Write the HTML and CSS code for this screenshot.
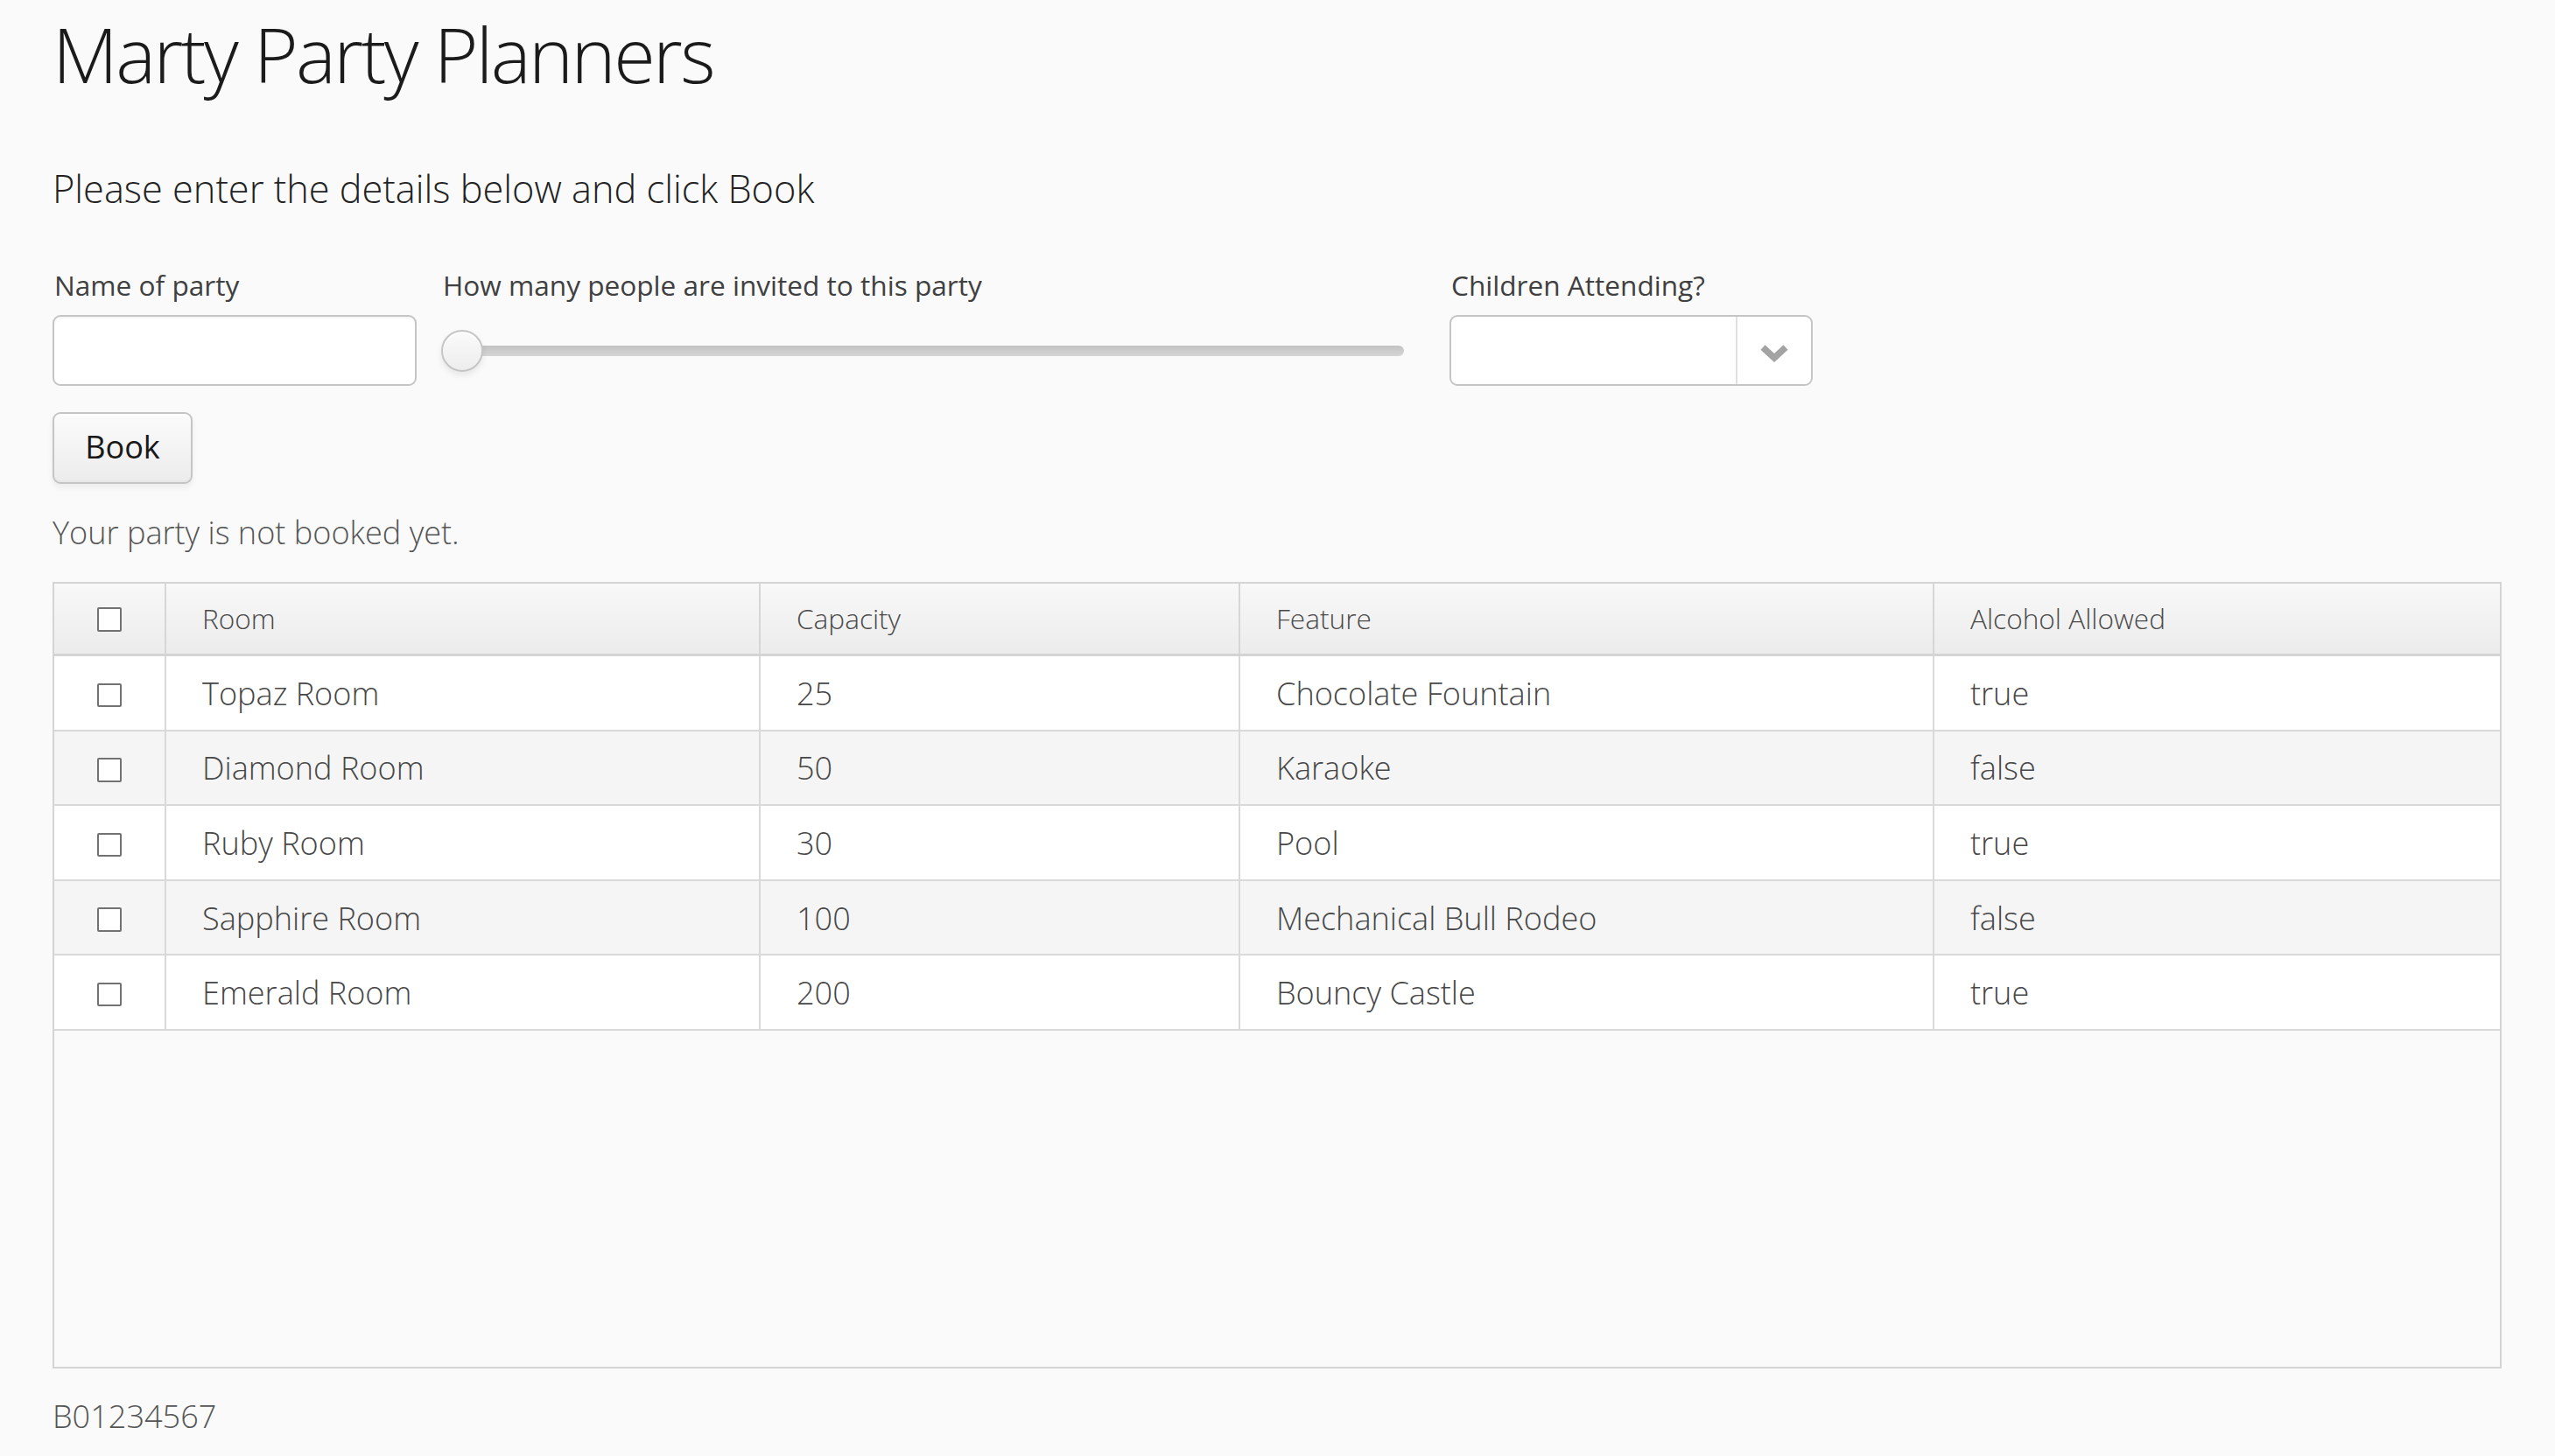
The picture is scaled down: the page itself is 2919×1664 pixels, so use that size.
FILE: index.html
```html
<!DOCTYPE html>
<html lang="en">
<head>
<meta charset="utf-8">
<title>Marty Party Planners</title>
<link rel="stylesheet" href="styles.css">
</head>
<body>
<div class="page">
  <h1 class="title">Marty Party Planners</h1>
  <p class="intro">Please enter the details below and click Book</p>

  <div class="form-row">
    <div class="field field-name">
      <label class="caption">Name of party</label>
      <input class="textfield" type="text">
    </div>
    <div class="field field-slider">
      <label class="caption caption-slider">How many people are invited to this party</label>
      <div class="slider">
        <div class="slider-track"></div>
        <div class="slider-handle"></div>
      </div>
    </div>
    <div class="field field-combo">
      <label class="caption">Children Attending?</label>
      <div class="combo">
        <div class="combo-input"></div>
        <div class="combo-button">
          <svg class="chevron" viewBox="0 0 32 22" width="32" height="22" aria-hidden="true">
            <polyline points="3,4 16,16 29,4" fill="none" stroke="#a3a3a3" stroke-width="7.5" stroke-linecap="butt" stroke-linejoin="miter"/>
          </svg>
        </div>
      </div>
    </div>
  </div>

  <button class="btn" type="button">Book</button>

  <p class="status">Your party is not booked yet.</p>

  <div class="grid">
    <div class="grid-row grid-header">
      <div class="cell cell-check"><span class="checkbox"></span></div>
      <div class="cell">Room</div>
      <div class="cell">Capacity</div>
      <div class="cell">Feature</div>
      <div class="cell cell-last">Alcohol Allowed</div>
    </div>
    <div class="grid-row grid-body odd">
      <div class="cell cell-check"><span class="checkbox"></span></div>
      <div class="cell">Topaz Room</div>
      <div class="cell">25</div>
      <div class="cell">Chocolate Fountain</div>
      <div class="cell cell-last">true</div>
    </div>
    <div class="grid-row grid-body even">
      <div class="cell cell-check"><span class="checkbox"></span></div>
      <div class="cell">Diamond Room</div>
      <div class="cell">50</div>
      <div class="cell">Karaoke</div>
      <div class="cell cell-last">false</div>
    </div>
    <div class="grid-row grid-body odd">
      <div class="cell cell-check"><span class="checkbox"></span></div>
      <div class="cell">Ruby Room</div>
      <div class="cell">30</div>
      <div class="cell">Pool</div>
      <div class="cell cell-last">true</div>
    </div>
    <div class="grid-row grid-body even">
      <div class="cell cell-check"><span class="checkbox"></span></div>
      <div class="cell">Sapphire Room</div>
      <div class="cell">100</div>
      <div class="cell">Mechanical Bull Rodeo</div>
      <div class="cell cell-last">false</div>
    </div>
    <div class="grid-row grid-body odd">
      <div class="cell cell-check"><span class="checkbox"></span></div>
      <div class="cell">Emerald Room</div>
      <div class="cell">200</div>
      <div class="cell">Bouncy Castle</div>
      <div class="cell cell-last">true</div>
    </div>
  </div>

  <p class="footer">B01234567</p>
</div>
</body>
</html>
```

FILE: styles.css
```css
* {
  box-sizing: border-box;
}

html, body {
  margin: 0;
  padding: 0;
  background: #fafafa;
}

body {
  font-family: "Open Sans", "Noto Sans", "Liberation Sans", sans-serif;
  color: #464646;
  font-weight: 300;
}

.page {
  padding: 0 60px;
  display: flex;
  flex-direction: column;
  align-items: flex-start;
}

.title {
  margin: 0;
  padding-top: 15px;
  font-size: 86.6px;
  line-height: 93px;
  font-weight: 300;
  letter-spacing: -0.03em;
  color: #1b1b1b;
  white-space: nowrap;
}

.intro {
  margin: 80px 0 0 0;
  font-size: 43.3px;
  line-height: 56px;
  font-weight: 300;
  color: #222;
  white-space: nowrap;
}

.form-row {
  margin-top: 61px;
  display: flex;
  align-items: flex-start;
}

.field {
  display: flex;
  flex-direction: column;
}

.caption {
  font-size: 31.6px;
  line-height: 42px;
  font-weight: 400;
  color: #404040;
  padding-left: 2px;
  margin-bottom: 13px;
  white-space: nowrap;
}

.field-name {
  width: 416px;
}

.textfield {
  width: 416px;
  height: 81px;
  margin: 0;
  border: 2px solid #c5c5c5;
  border-radius: 9px;
  background: #fff;
  box-shadow: inset 0 2px 0 #f7f7f7;
  font-family: inherit;
  font-size: 36px;
  padding: 0 18px;
  outline: none;
}

.field-slider {
  margin-left: 28px;
  width: 1100px;
}

.slider {
  position: relative;
  height: 81px;
  display: flex;
  align-items: center;
}

.slider-track {
  margin-left: 12px;
  flex: 1;
  height: 12px;
  border-radius: 6px;
  background: linear-gradient(to bottom, #c2c2c2, #d6d6d6);
}

.slider-handle {
  position: absolute;
  left: 0;
  top: 16.5px;
  width: 48px;
  height: 48px;
  border-radius: 50%;
  border: 2px solid #c5c5c5;
  background: linear-gradient(to bottom, #fafafa, #ededed);
  box-shadow: 0 4px 7px rgba(0, 0, 0, 0.08), inset 0 2px 0 #fff;
}

.field-combo {
  margin-left: 52px;
  width: 415px;
}

.combo {
  display: flex;
  height: 81px;
  border: 2px solid #c5c5c5;
  border-radius: 9px;
  background: #fff;
  overflow: hidden;
}

.combo-input {
  flex: 1;
}

.combo-button {
  width: 86px;
  border-left: 2px solid #e0e0e0;
  display: flex;
  align-items: center;
  justify-content: center;
  padding-top: 6px;
}

.chevron {
  display: block;
}

.btn {
  margin-top: 30px;
  width: 160px;
  height: 82px;
  padding: 0 0 5px 0;
  border: 2px solid #c5c5c5;
  border-radius: 9px;
  background: linear-gradient(to bottom, #fbfbfb, #ececec);
  box-shadow: inset 0 2px 0 #fff, inset 0 -2px 0 #e7e7e7, 0 4px 7px rgba(0, 0, 0, 0.06);
  font-family: inherit;
  font-size: 36.1px;
  font-weight: 400;
  color: #191919;
  cursor: pointer;
}

.status {
  margin: 31px 0 0 0;
  font-size: 36.1px;
  line-height: 48px;
  font-weight: 300;
  color: #555;
  white-space: nowrap;
}

.grid {
  margin-top: 33px;
  width: 2798px;
  height: 899px;
  border: 2px solid #d4d4d4;
  background: #fafafa;
  display: flex;
  flex-direction: column;
}

.grid-row {
  display: grid;
  grid-template-columns: 128px 679px 548px 793px 1fr;
}

.grid-header {
  height: 83px;
  border-bottom: 3px solid #d4d4d4;
  background: linear-gradient(to bottom, #f8f8f8, #ececec);
  font-size: 31.6px;
  line-height: 42px;
  font-weight: 300;
  color: #4a4a4a;
}

.grid-body {
  height: 85.6px;
  border-bottom: 2px solid #d9d9d9;
  font-size: 36.1px;
  line-height: 48px;
  font-weight: 300;
  color: #474747;
}

.grid-body.odd {
  background: #fff;
}

.grid-body.even {
  background: #f5f5f5;
}

.cell {
  display: flex;
  align-items: center;
  padding-left: 41px;
  border-right: 2px solid #d9d9d9;
  white-space: nowrap;
  overflow: hidden;
}

.grid-header .cell {
  border-right-color: #d6d6d6;
}

.cell-check {
  padding-left: 0;
  justify-content: center;
}

.cell-last {
  border-right: none;
}

.checkbox {
  display: block;
  width: 27.6px;
  height: 27.6px;
  border: 2.2px solid #727272;
  border-radius: 2px;
  background: #fff;
}

.grid-header .checkbox {
  margin-top: 2px;
}

.grid-body .checkbox {
  margin-top: 5px;
}

.footer {
  margin: 30px 0 0 0;
  font-size: 36.1px;
  line-height: 48px;
  font-weight: 300;
  color: #555;
  white-space: nowrap;
}
```
